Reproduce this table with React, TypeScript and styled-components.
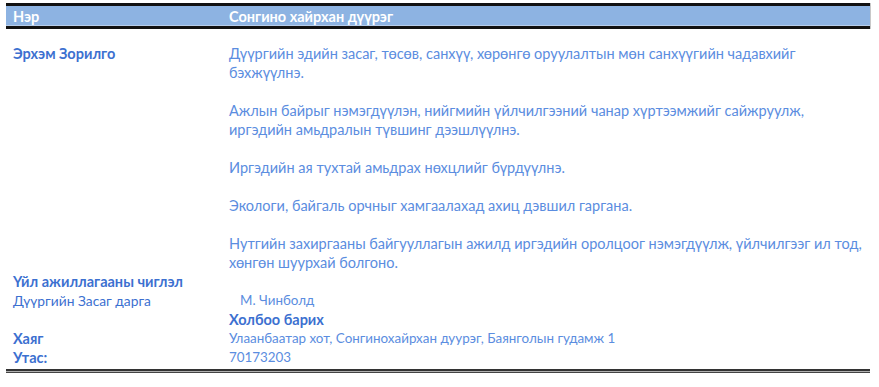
import React from "react";
import styled, { createGlobalStyle } from "styled-components";

const GlobalStyle = createGlobalStyle`
  html, body {
    margin: 0;
    padding: 0;
    background: #ffffff;
  }
  body {
    font-family: "Lato", "Noto Sans", "DejaVu Sans", sans-serif;
  }
`;

const Page = styled.div`
  width: 864px;
  padding: 3px 0 0 6px;
`;

const HeaderBar = styled.div`
  display: grid;
  grid-template-columns: 216px 1fr;
  height: 20px;
  padding-left: 7px;
  align-items: center;
  background: #8db3e2;
  border-top: 3px solid #111;
  border-bottom: 3px solid #111;
  box-shadow: inset 0 -1px 0 #b7cdea, 1px 0 0 #c8c8c8;
  color: #ffffff;
  font-weight: 700;
  font-size: 14.5px;
`;

const Body = styled.div`
  padding: 15px 0 2px 7px;
  font-size: 14.5px;
  line-height: 19px;
`;

const Row = styled.div<{ $gap?: boolean }>`
  display: grid;
  grid-template-columns: 216px 1fr;
  margin-bottom: ${(p) => (p.$gap ? "19px" : "0")};
`;

const Label = styled.div<{ $bold?: boolean; $small?: boolean }>`
  color: #3c70d0;
  font-weight: ${(p) => (p.$bold ? 700 : 400)};
  font-size: ${(p) => (p.$small ? "13.8px" : "inherit")};
  white-space: nowrap;
`;

const Value = styled.div<{ $indent?: boolean; $bold?: boolean; $small?: boolean }>`
  color: ${(p) => (p.$bold ? "#3c70d0" : "#5b8de0")};
  font-weight: ${(p) => (p.$bold ? 700 : 400)};
  font-size: ${(p) => (p.$small ? "13.4px" : "inherit")};
  padding-left: ${(p) => (p.$indent ? "11px" : "0")};
  white-space: nowrap;
`;

const Rule = styled.div`
  height: 1px;
  background: #b0b0b0;
  border-top: 2px solid #333;
  border-bottom: 1px solid #444;
`;

const goals = [
  [
    "Дүүргийн эдийн засаг, төсөв, санхүү, хөрөнгө оруулалтын мөн санхүүгийн чадавхийг",
    "бэхжүүлнэ.",
  ],
  [
    "Ажлын байрыг нэмэгдүүлэн, нийгмийн үйлчилгээний чанар хүртээмжийг сайжруулж,",
    "иргэдийн амьдралын түвшинг дээшлүүлнэ.",
  ],
  ["Иргэдийн ая тухтай амьдрах нөхцлийг бүрдүүлнэ."],
  ["Экологи, байгаль орчныг хамгаалахад ахиц дэвшил гаргана."],
  [
    "Нутгийн захиргааны байгууллагын ажилд иргэдийн оролцоог нэмэгдүүлж, үйлчилгээг ил тод,",
    "хөнгөн шуурхай болгоно.",
  ],
];

export default function App() {
  return (
    <Page>
      <GlobalStyle />
      <HeaderBar>
        <span>Нэр</span>
        <span>Сонгино хайрхан дүүрэг</span>
      </HeaderBar>
      <Body>
        {goals.map((lines, i) => (
          <Row key={i} $gap={i < goals.length - 1}>
            <Label $bold>{i === 0 ? "Эрхэм Зорилго" : ""}</Label>
            <Value>
              {lines.map((l, j) => (
                <div key={j}>{l}</div>
              ))}
            </Value>
          </Row>
        ))}
        <Row>
          <Label $bold>Үйл ажиллагааны чиглэл</Label>
          <Value />
        </Row>
        <Row>
          <Label $small>Дүүргийн Засаг дарга</Label>
          <Value $indent $small>М. Чинболд</Value>
        </Row>
        <Row>
          <Label />
          <Value $bold>Холбоо барих</Value>
        </Row>
        <Row>
          <Label $bold>Хаяг</Label>
          <Value $small>Улаанбаатар хот, Сонгинохайрхан дуурэг, Баянголын гудамж 1</Value>
        </Row>
        <Row>
          <Label $bold>Утас:</Label>
          <Value $small>70173203</Value>
        </Row>
      </Body>
      <Rule />
    </Page>
  );
}
